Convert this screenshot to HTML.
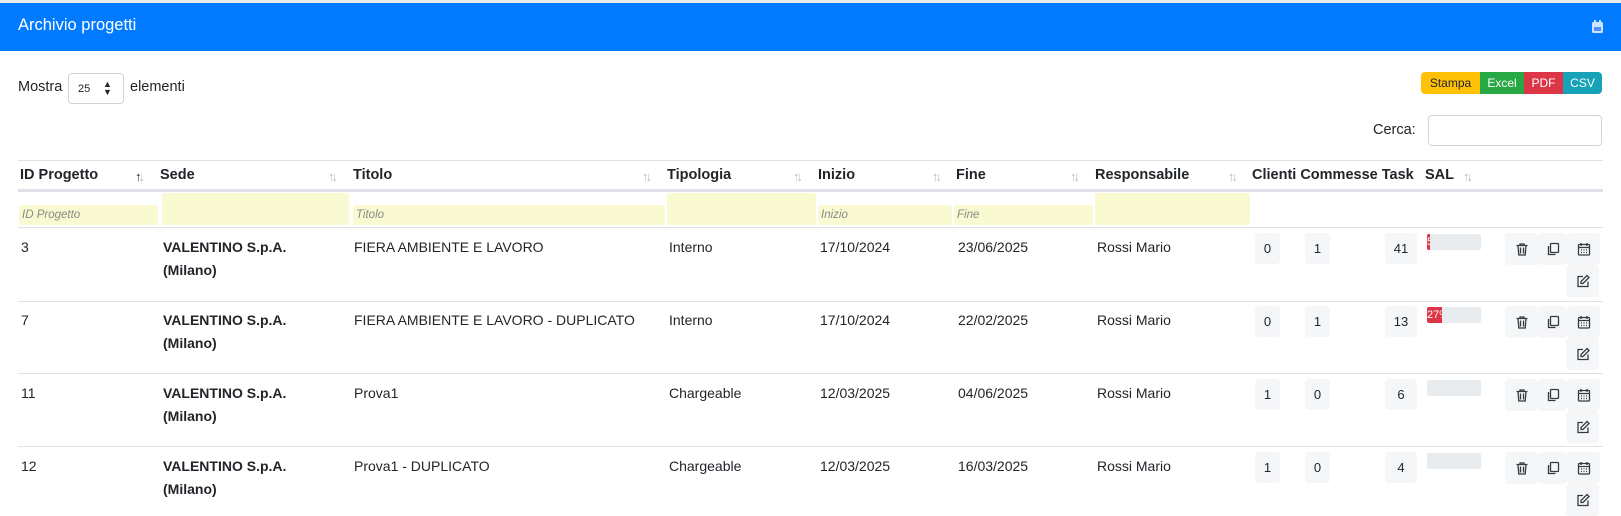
<!DOCTYPE html>
<html><head><meta charset="utf-8"><style>
*{box-sizing:border-box;margin:0;padding:0}
body{width:1621px;height:512px;overflow:hidden;background:#fff;font-family:"Liberation Sans",sans-serif;color:#212529;font-size:14px;position:relative}
.a{position:absolute;white-space:nowrap}
.hd{left:0;top:3px;width:1621px;height:48px;background:#007bff}
.top{left:0;top:0;width:1621px;height:3px;background:#e9ecef}
.th{font-weight:bold;font-size:14.5px;top:167px}
.si{font-size:13px;color:#bbb;top:169px;letter-spacing:-3px;font-weight:bold}
.f{background:#fafad2;border-radius:3px}
.fp{font-style:italic;color:#888;font-size:11.5px;padding:4px 3px}
.ln{left:18px;width:1585px;height:1px;background:#dee2e6}
.t{font-size:14px}
.b{font-weight:bold}
.bg{background:#f5f6f8;border-radius:4px;text-align:center;font-size:13px;line-height:31px;height:31px}
.bar{background:#e9ecef;height:16px;width:54px;overflow:hidden;border-radius:2px}
.bar i{display:block;height:16px;background:#dc3545;color:#fff;font-style:normal;font-size:11px;line-height:16px;overflow:hidden}
.ic{background:#f5f6f8;border-radius:4px;width:33px;height:32px;display:flex;align-items:center;justify-content:center}
</style></head><body>
<div class="a top"></div>
<div class="a hd"></div>
<div class="a" style="left:18px;top:16px;color:#fff;font-size:16.5px">Archivio progetti</div>
<svg class="a" style="left:1591px;top:20px" width="13" height="14" viewBox="0 0 13 14"><rect x="1" y="2" width="11" height="11" rx="1.5" fill="#cfe2ff"/><rect x="3" y="0" width="2" height="3" fill="#cfe2ff"/><rect x="8" y="0" width="2" height="3" fill="#cfe2ff"/><rect x="3" y="7" width="7" height="4" fill="#4a90ff"/></svg>

<div class="a" style="left:18px;top:79px;font-size:14.5px">Mostra</div>
<div class="a" style="left:68px;top:73px;width:56px;height:31px;border:1px solid #ced4da;border-radius:4px;font-size:11px;padding:9px 0 0 9px">25<span style="position:absolute;left:34px;top:6px;font-size:9px;line-height:8px">▲<br>▼</span></div>
<div class="a" style="left:130px;top:79px;font-size:14.5px">elementi</div>

<div class="a" style="left:1421px;top:72px;width:181px;height:22px;border-radius:4px;overflow:hidden;display:flex;font-size:12px;line-height:22px;text-align:center">
<div style="width:59px;background:#ffc107;color:#212529">Stampa</div><div style="width:44px;background:#28a745;color:#fff">Excel</div><div style="width:39px;background:#dc3545;color:#fff">PDF</div><div style="width:39px;background:#17a2b8;color:#fff">CSV</div></div>

<div class="a" style="left:1373px;top:122px;font-size:14.5px">Cerca:</div>
<div class="a" style="left:1428px;top:115px;width:174px;height:31px;border:1px solid #ced4da;border-radius:4px"></div>

<div class="a ln" style="top:160px"></div>
<div class="a th" style="left:20px">ID Progetto</div><div class="a si" style="left:135px;color:#222">↑<span style="color:#bbb">↓</span></div>
<div class="a th" style="left:160px">Sede</div><div class="a si" style="left:328px">↑↓</div>
<div class="a th" style="left:353px">Titolo</div><div class="a si" style="left:642px">↑↓</div>
<div class="a th" style="left:667px">Tipologia</div><div class="a si" style="left:793px">↑↓</div>
<div class="a th" style="left:818px">Inizio</div><div class="a si" style="left:932px">↑↓</div>
<div class="a th" style="left:956px">Fine</div><div class="a si" style="left:1070px">↑↓</div>
<div class="a th" style="left:1095px">Responsabile</div><div class="a si" style="left:1228px">↑↓</div>
<div class="a th" style="left:1252px">Clienti Commesse Task</div>
<div class="a th" style="left:1425px">SAL</div><div class="a si" style="left:1463px">↑↓</div>
<div class="a" style="left:18px;top:189px;width:1585px;height:3px;background:#dee2e6"></div>

<div class="a f fp" style="left:19px;top:205px;width:139px;height:20px">ID Progetto</div>
<div class="a f" style="left:162px;top:193px;width:187px;height:32px"></div>
<div class="a f fp" style="left:353px;top:205px;width:312px;height:20px">Titolo</div>
<div class="a f" style="left:667px;top:193px;width:149px;height:32px"></div>
<div class="a f fp" style="left:818px;top:205px;width:134px;height:20px">Inizio</div>
<div class="a f fp" style="left:954px;top:205px;width:139px;height:20px">Fine</div>
<div class="a f" style="left:1095px;top:193px;width:155px;height:32px"></div>

<div class="a ln" style="top:227px"></div>
<div class="a ln" style="top:301px"></div>
<div class="a ln" style="top:373px"></div>
<div class="a ln" style="top:446px"></div>

<div class="a t" style="left:21px;top:239px">3</div>
<div class="a t b" style="left:163px;top:239px">VALENTINO S.p.A.</div><div class="a t b" style="left:163px;top:262px">(Milano)</div>
<div class="a t" style="left:354px;top:239px">FIERA AMBIENTE E LAVORO</div>
<div class="a t" style="left:669px;top:239px">Interno</div>
<div class="a t" style="left:820px;top:239px">17/10/2024</div>
<div class="a t" style="left:958px;top:239px">23/06/2025</div>
<div class="a t" style="left:1097px;top:239px">Rossi Mario</div>
<div class="a bg" style="left:1255px;top:233px;width:25px">0</div>
<div class="a bg" style="left:1305px;top:233px;width:25px">1</div>
<div class="a bg" style="left:1385px;top:233px;width:32px">41</div>
<div class="a bar" style="left:1427px;top:234px"><i style="width:3px">5</i></div>

<div class="a t" style="left:21px;top:312px">7</div>
<div class="a t b" style="left:163px;top:312px">VALENTINO S.p.A.</div><div class="a t b" style="left:163px;top:335px">(Milano)</div>
<div class="a t" style="left:354px;top:312px">FIERA AMBIENTE E LAVORO - DUPLICATO</div>
<div class="a t" style="left:669px;top:312px">Interno</div>
<div class="a t" style="left:820px;top:312px">17/10/2024</div>
<div class="a t" style="left:958px;top:312px">22/02/2025</div>
<div class="a t" style="left:1097px;top:312px">Rossi Mario</div>
<div class="a bg" style="left:1255px;top:306px;width:25px">0</div>
<div class="a bg" style="left:1305px;top:306px;width:25px">1</div>
<div class="a bg" style="left:1385px;top:306px;width:32px">13</div>
<div class="a bar" style="left:1427px;top:307px"><i style="width:15px">27%</i></div>

<div class="a t" style="left:21px;top:385px">11</div>
<div class="a t b" style="left:163px;top:385px">VALENTINO S.p.A.</div><div class="a t b" style="left:163px;top:408px">(Milano)</div>
<div class="a t" style="left:354px;top:385px">Prova1</div>
<div class="a t" style="left:669px;top:385px">Chargeable</div>
<div class="a t" style="left:820px;top:385px">12/03/2025</div>
<div class="a t" style="left:958px;top:385px">04/06/2025</div>
<div class="a t" style="left:1097px;top:385px">Rossi Mario</div>
<div class="a bg" style="left:1255px;top:379px;width:25px">1</div>
<div class="a bg" style="left:1305px;top:379px;width:25px">0</div>
<div class="a bg" style="left:1385px;top:379px;width:32px">6</div>
<div class="a bar" style="left:1427px;top:380px"></div>

<div class="a t" style="left:21px;top:458px">12</div>
<div class="a t b" style="left:163px;top:458px">VALENTINO S.p.A.</div><div class="a t b" style="left:163px;top:481px">(Milano)</div>
<div class="a t" style="left:354px;top:458px">Prova1 - DUPLICATO</div>
<div class="a t" style="left:669px;top:458px">Chargeable</div>
<div class="a t" style="left:820px;top:458px">12/03/2025</div>
<div class="a t" style="left:958px;top:458px">16/03/2025</div>
<div class="a t" style="left:1097px;top:458px">Rossi Mario</div>
<div class="a bg" style="left:1255px;top:452px;width:25px">1</div>
<div class="a bg" style="left:1305px;top:452px;width:25px">0</div>
<div class="a bg" style="left:1385px;top:452px;width:32px">4</div>
<div class="a bar" style="left:1427px;top:453px"></div>

<svg width="0" height="0" style="position:absolute"><defs>
<g id="tr" fill="none" stroke="#343a40" stroke-width="1.3"><path d="M1.5 3.5h11M5 3.5V2h4v1.5M3 3.5l.8 9.5h6.4l.8-9.5M5.5 5.5v6M8.5 5.5v6"/></g>
<g id="cp" fill="none" stroke="#343a40" stroke-width="1.3"><rect x="4.5" y="1.5" width="8" height="9" rx="1"/><path d="M2.5 4v8.5h7"/></g>
<g id="cl" fill="none" stroke="#343a40" stroke-width="1.3"><rect x="1.5" y="2.5" width="11" height="10.5" rx="1"/><path d="M4 1v3M10 1v3M1.5 5.5h11" /><path d="M4 8h1M6.5 8h1M9 8h1M4 10.5h1M6.5 10.5h1M9 10.5h1" stroke-width="1.2"/></g>
<g id="ed" fill="none" stroke="#343a40" stroke-width="1.3"><path d="M7 2.5H2v10h10V7.5"/><path d="M11 1.5l2 2-6 6H5v-2z"/></g>
</defs></svg>
<div class="a" style="left:1505px;top:233px;display:flex"><div class="ic"><svg width="14" height="14"><use href="#tr"/></svg></div><div class="ic" style="width:29px"><svg width="14" height="14"><use href="#cp"/></svg></div><div class="ic"><svg width="14" height="14"><use href="#cl"/></svg></div></div>
<div class="a ic" style="left:1566px;top:265px"><svg width="14" height="14"><use href="#ed"/></svg></div>
<div class="a" style="left:1505px;top:306px;display:flex"><div class="ic"><svg width="14" height="14"><use href="#tr"/></svg></div><div class="ic" style="width:29px"><svg width="14" height="14"><use href="#cp"/></svg></div><div class="ic"><svg width="14" height="14"><use href="#cl"/></svg></div></div>
<div class="a ic" style="left:1566px;top:338px"><svg width="14" height="14"><use href="#ed"/></svg></div>
<div class="a" style="left:1505px;top:379px;display:flex"><div class="ic"><svg width="14" height="14"><use href="#tr"/></svg></div><div class="ic" style="width:29px"><svg width="14" height="14"><use href="#cp"/></svg></div><div class="ic"><svg width="14" height="14"><use href="#cl"/></svg></div></div>
<div class="a ic" style="left:1566px;top:411px"><svg width="14" height="14"><use href="#ed"/></svg></div>
<div class="a" style="left:1505px;top:452px;display:flex"><div class="ic"><svg width="14" height="14"><use href="#tr"/></svg></div><div class="ic" style="width:29px"><svg width="14" height="14"><use href="#cp"/></svg></div><div class="ic"><svg width="14" height="14"><use href="#cl"/></svg></div></div>
<div class="a ic" style="left:1566px;top:484px"><svg width="14" height="14"><use href="#ed"/></svg></div>
</body></html>
